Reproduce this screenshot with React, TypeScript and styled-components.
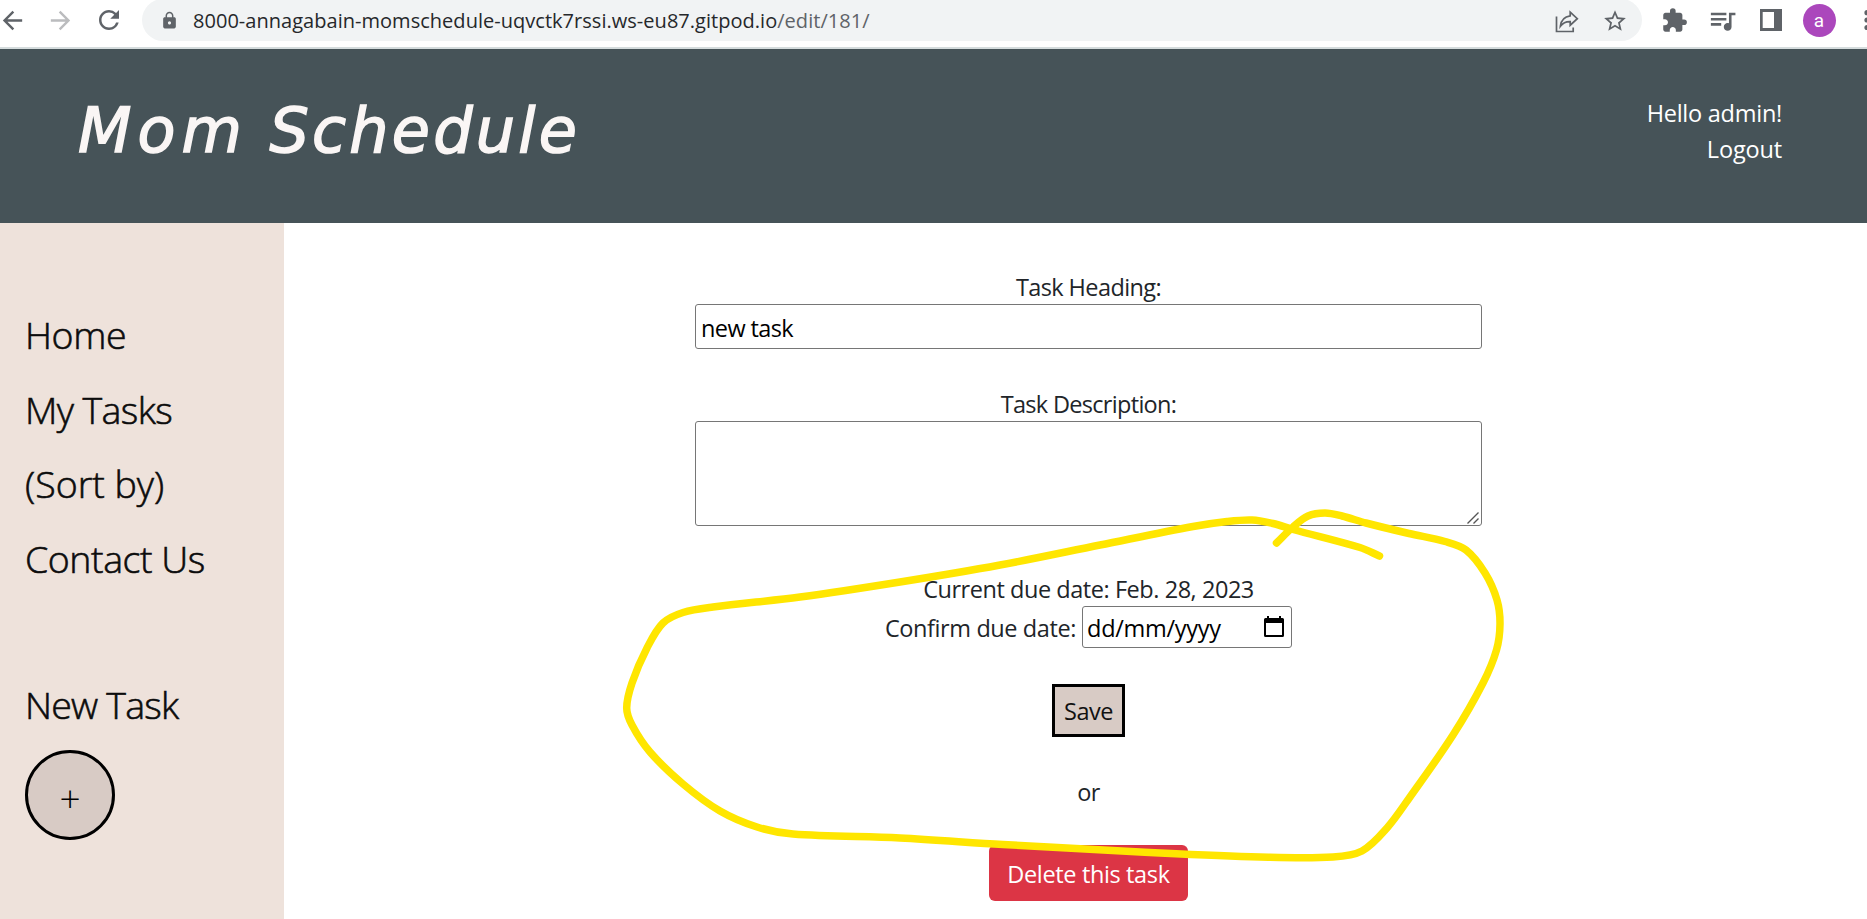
import React from 'react';
import styled, { createGlobalStyle } from 'styled-components';
import {
  MdArrowBack,
  MdArrowForward,
  MdExtension,
  MdLock,
  MdQueueMusic,
  MdRefresh,
  MdStarBorder,
} from 'react-icons/md';

const GlobalStyle = createGlobalStyle`
  *, *::before, *::after { box-sizing: border-box; }
  html, body { margin: 0; height: 919px; overflow: hidden; background: #fff; }
  body {
    font-family: "Open Sans", "Noto Sans", sans-serif;
    font-size: 23.5px;
    line-height: 36px;
    color: #212529;
  }
`;

const Page = styled.div`
  position: relative;
  display: flex;
  flex-direction: column;
  width: 1867px;
  height: 919px;
  overflow: hidden;
`;

/* Browser toolbar */

const Toolbar = styled.div`
  display: flex;
  align-items: flex-start;
  flex: none;
  height: 49px;
  margin-left: -11.5px;
  border-bottom: 2px solid #d5dcdd;
  overflow: hidden;
`;

const IconSlot = styled.span<{ $muted?: boolean }>`
  display: flex;
  align-items: center;
  justify-content: center;
  flex: none;
  width: 48px;
  height: 40px;
  color: ${(p) => (p.$muted ? '#bbbcbe' : '#5f6368')};
  svg { display: block; flex: none; }
`;

const AddressBar = styled.div`
  display: flex;
  align-items: center;
  flex: none;
  width: 1499.5px;
  height: 42px;
  margin: -1px 9px 0 9.5px;
  padding: 1px 3px 0 3px;
  border-radius: 21px;
  background: #f1f3f4;
`;

const Url = styled.span`
  flex: 1;
  font-size: 20px;
  line-height: 40px;
  letter-spacing: 0.03px;
  white-space: nowrap;
  color: #26282b;
`;

const UrlPath = styled.span`
  color: #5f6368;
`;

const Avatar = styled.span`
  display: flex;
  align-items: center;
  justify-content: center;
  width: 33px;
  height: 33px;
  margin: 1px 0 0 1px;
  border-radius: 50%;
  background: #ab47bc;
  color: #fff;
  font: 400 19px/33px Roboto, sans-serif;
`;

/* Site header */

const Header = styled.header`
  display: flex;
  justify-content: space-between;
  align-items: flex-start;
  flex: none;
  height: 174px;
  padding: 40px 85px 0 78px;
  background: #465358;
  color: #fff;
`;

const Logo = styled.h1`
  margin: 2px 0 0;
  font-family: "DejaVu Sans", sans-serif;
  font-size: 62px;
  line-height: 80px;
  font-style: italic;
  font-weight: 400;
  letter-spacing: 3.2px;
  white-space: nowrap;
  color: #faf6f5;
  -webkit-text-stroke: 1.5px #faf6f5;
`;

const LogoLead = styled.span`
  letter-spacing: 6px;
  word-spacing: -4px;
`;

const Account = styled.div`
  display: flex;
  flex-direction: column;
  align-items: flex-end;
  padding-top: 5px;
`;

const Text = styled.span<{ $spacing?: number }>`
  height: 36px;
  line-height: 38px;
  letter-spacing: ${(p) => p.$spacing ?? 0}px;
  white-space: nowrap;
`;

/* Sidebar */

const Body = styled.div`
  display: flex;
  flex: 1;
  min-height: 0;
`;

const Sidebar = styled.nav`
  display: flex;
  flex-direction: column;
  flex: none;
  width: 284px;
  padding: 75.4px 0 0 25px;
  background: #eee2db;
`;

const NavItem = styled.a<{ $spacing: number }>`
  font-size: 37.5px;
  font-weight: 300;
  line-height: 74.4px;
  letter-spacing: ${(p) => p.$spacing}px;
  white-space: nowrap;
  color: #0c0c0c;
  -webkit-text-stroke: 0.6px #0c0c0c;
`;

const NewTask = styled.div`
  display: flex;
  flex-direction: column;
  margin-top: 71.5px;
`;

const AddButton = styled.button`
  display: flex;
  align-items: center;
  justify-content: center;
  width: 90px;
  height: 90px;
  margin: 7.6px 0 0;
  padding: 6px 0 0;
  border: 3px solid #000;
  border-radius: 50%;
  background: #d8cbc5;
  font: 300 37px/50px "Open Sans", sans-serif;
  color: #000;
`;

/* Edit form */

const Form = styled.main`
  display: flex;
  flex-direction: column;
  align-items: center;
  flex: 1;
  padding: 45px 0 0 26px;
`;

const Field = styled.div<{ $gap: number }>`
  position: relative;
  display: flex;
  flex-direction: column;
  align-items: center;
  width: 787px;
  margin-bottom: ${(p) => p.$gap}px;
`;

const TextInput = styled.input`
  width: 100%;
  height: 45px;
  padding: 3px 5px 0;
  border: 1px solid #767676;
  border-radius: 3px;
  outline: none;
  background: #fff;
  font: 23.5px "Open Sans", sans-serif;
  letter-spacing: -0.6px;
  color: #000;
`;

const TextArea = styled.textarea`
  display: block;
  width: 100%;
  height: 105px;
  border: 1px solid #767676;
  border-radius: 3px;
  outline: none;
  resize: none;
`;

const ResizeGrip = styled.svg`
  position: absolute;
  right: 3px;
  bottom: 2px;
`;

const DateRow = styled.div`
  display: flex;
  align-items: center;
  height: 42px;
  gap: 6px;
  margin: 0 0 36px;
`;

const DateBox = styled.div`
  display: flex;
  align-items: center;
  justify-content: space-between;
  width: 210px;
  height: 42px;
  padding: 0 7px 0 4px;
  border: 1px solid #767676;
  border-radius: 3px;
  color: #000;
  svg { margin-bottom: 1px; }
`;

const SaveButton = styled.button`
  display: flex;
  align-items: center;
  justify-content: center;
  width: 73px;
  height: 53px;
  margin-bottom: 36px;
  padding: 0 0 1px;
  border: 3px solid #000;
  background: #d8cbc5;
  font: inherit;
  color: #111;
`;

const DeleteButton = styled.button`
  display: flex;
  align-items: center;
  justify-content: center;
  width: 199px;
  height: 56px;
  margin-top: 36px;
  padding: 0;
  border: 0;
  border-radius: 6px;
  background: #dc3545;
  font: inherit;
  color: #fff;
`;

const Marker = styled.svg`
  position: absolute;
  inset: 0;
  pointer-events: none;
`;

const strokePoints: [number, number][] = [
  [1276.5, 543], [1293, 527], [1308, 516], [1325, 513], [1342, 516], [1366, 523],
  [1409, 533.5], [1445, 541.5], [1466, 550], [1485, 573], [1497, 600], [1500, 624],
  [1496.5, 650], [1483, 683], [1453, 735], [1410, 797], [1387, 828], [1362, 851],
  [1333, 857], [1260, 857], [1160, 853], [1003, 844.5], [900, 838], [793, 834],
  [757, 827], [720, 811], [683, 784], [650, 752], [632, 725], [626.7, 708],
  [632, 683], [647, 648], [663, 623], [683, 612.5], [713, 607], [800, 597],
  [900, 582], [1000, 565], [1100, 545], [1193, 526.5], [1227, 521.5], [1252, 520],
  [1273, 523.5], [1293, 529.5], [1360, 547.5], [1379.5, 556],
];

/* Smooth spline through the marker's points, as cubic béziers. */
function smoothPath(points: [number, number][]): string {
  let d = `M${points[0][0]} ${points[0][1]}`;
  for (let i = 0; i < points.length - 1; i++) {
    const p0 = points[i - 1] ?? points[i];
    const p1 = points[i];
    const p2 = points[i + 1];
    const p3 = points[i + 2] ?? p2;
    const len = Math.hypot(p2[0] - p1[0], p2[1] - p1[1]);
    const tangent = (a: [number, number], b: [number, number]) => {
      const l = Math.hypot(b[0] - a[0], b[1] - a[1]) || 1;
      return [((b[0] - a[0]) / l) * (len / 3), ((b[1] - a[1]) / l) * (len / 3)];
    };
    const t1 = tangent(p0, p2);
    const t2 = tangent(p1, p3);
    d += `C${p1[0] + t1[0]} ${p1[1] + t1[1]} ${p2[0] - t2[0]} ${p2[1] - t2[1]} ${p2[0]} ${p2[1]}`;
  }
  return d;
}

const ShareIcon = () => (
  <svg width="24" height="24" viewBox="0 0 24 24" fill="none" stroke="currentColor" strokeWidth="1.7">
    <path d="M1.5 7.5V22.5H18.2V18.5" />
    <path d="M15.2 3.2L22.3 9.7L15.2 16.2V12.6C11 12.4 8 13.8 5.4 17.2C6 11.8 9 7.6 15.2 6.8Z" strokeLinejoin="miter" />
  </svg>
);

const SidePanelIcon = () => (
  <svg width="22" height="22" viewBox="0 0 22 22">
    <path fill="currentColor" fillRule="evenodd" d="M0 0H22V22H0ZM2.7 3V19H14V3Z" />
  </svg>
);

const MoreIcon = () => (
  <svg width="6" height="24" viewBox="0 0 6 24" fill="currentColor">
    <circle cx="3" cy="4.7" r="2.6" />
    <circle cx="3" cy="12" r="2.6" />
    <circle cx="3" cy="19.5" r="2.6" />
  </svg>
);

const CalendarIcon = () => (
  <svg width="20" height="21" viewBox="0 0 20 21">
    <path
      fill="#000"
      fillRule="evenodd"
      d="M3 0H5V2H15V0H17V2H18.5Q20 2 20 3.5V19.5Q20 21 18.5 21H1.5Q0 21 0 19.5V3.5Q0 2 1.5 2H3ZM2 7V19H18V7Z"
    />
  </svg>
);

const links = [
  { label: 'Home', spacing: -0.4 },
  { label: 'My Tasks', spacing: -0.6 },
  { label: '(Sort by)', spacing: 0 },
  { label: 'Contact Us', spacing: -0.45 },
];

export default function App() {
  return (
    <Page>
      <GlobalStyle />
      <Toolbar>
        <IconSlot><MdArrowBack size={29} /></IconSlot>
        <IconSlot $muted><MdArrowForward size={29} /></IconSlot>
        <IconSlot><MdRefresh size={30} /></IconSlot>
        <AddressBar>
          <IconSlot><MdLock size={19} /></IconSlot>
          <Url>
            8000-annagabain-momschedule-uqvctk7rssi.ws-eu87.gitpod.io<UrlPath>/edit/181/</UrlPath>
          </Url>
          <IconSlot><ShareIcon /></IconSlot>
          <IconSlot><MdStarBorder size={26} /></IconSlot>
        </AddressBar>
        <IconSlot><MdExtension size={27} /></IconSlot>
        <IconSlot><MdQueueMusic size={31} /></IconSlot>
        <IconSlot><SidePanelIcon /></IconSlot>
        <IconSlot><Avatar>a</Avatar></IconSlot>
        <IconSlot><MoreIcon /></IconSlot>
      </Toolbar>

      <Header>
        <Logo><LogoLead>Mom </LogoLead>Schedule</Logo>
        <Account>
          <Text $spacing={-0.25}>Hello admin!</Text>
          <Text $spacing={-0.15}>Logout</Text>
        </Account>
      </Header>

      <Body>
        <Sidebar>
          {links.map((l) => (
            <NavItem key={l.label} $spacing={l.spacing}>{l.label}</NavItem>
          ))}
          <NewTask>
            <NavItem $spacing={-0.8}>New Task</NavItem>
            <AddButton>+</AddButton>
          </NewTask>
        </Sidebar>

        <Form>
          <Field $gap={36}>
            <Text as="label" $spacing={-0.6}>Task Heading:</Text>
            <TextInput defaultValue="new task" />
          </Field>
          <Field $gap={44}>
            <Text as="label" $spacing={-0.69}>Task Description:</Text>
            <TextArea />
            <ResizeGrip width="12" height="12" viewBox="0 0 12 12" stroke="#555" strokeWidth="1.4">
              <path d="M0.5 11.5L11.5 0.5M6.5 11.5L11.5 6.5" />
            </ResizeGrip>
          </Field>
          <Text $spacing={-0.45}>Current due date: Feb. 28, 2023</Text>
          <DateRow>
            <Text as="label" $spacing={-0.4}>Confirm due date:</Text>
            <DateBox>
              <Text $spacing={-0.3}>dd/mm/yyyy</Text>
              <CalendarIcon />
            </DateBox>
          </DateRow>
          <SaveButton><Text $spacing={-0.5}>Save</Text></SaveButton>
          <Text $spacing={-0.7}>or</Text>
          <DeleteButton><Text $spacing={-0.36}>Delete this task</Text></DeleteButton>
        </Form>
      </Body>

      <Marker width="1867" height="919" viewBox="0 0 1867 919">
        <path
          d={smoothPath(strokePoints)}
          fill="none"
          stroke="#ffe600"
          strokeWidth="7.5"
          strokeLinecap="round"
          strokeLinejoin="round"
        />
      </Marker>
    </Page>
  );
}
